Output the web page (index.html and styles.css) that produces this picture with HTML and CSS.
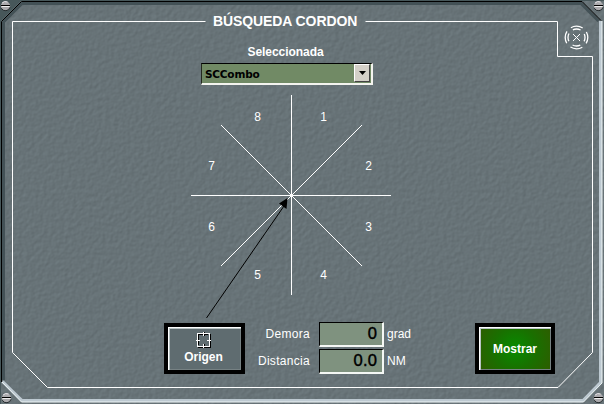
FILE: index.html
```html
<!DOCTYPE html>
<html lang="es">
<head>
<meta charset="utf-8">
<title>Búsqueda Cordon</title>
<link rel="stylesheet" href="styles.css">
</head>
<body>
<main class="panel">
  <svg class="frame" width="604" height="404" viewBox="0 0 604 404" aria-hidden="true">
    <defs>
      <filter id="stone" x="0" y="0" width="100%" height="100%" color-interpolation-filters="sRGB">
        <feTurbulence type="fractalNoise" baseFrequency="0.24" numOctaves="2" seed="7" stitchTiles="stitch"/>
        <feDiffuseLighting surfaceScale="0.17" diffuseConstant="1.25" lighting-color="#758287">
          <feDistantLight azimuth="225" elevation="45"/>
        </feDiffuseLighting>
      </filter>
      <g id="screw">
        <circle r="4.7" fill="#aaa9ac"/>
        <path d="M-4.2 2.2A4.7 4.7 0 0 0 4.5 1.3" fill="none" stroke="#262c2f" stroke-width="1"/>
        <path d="M-3.4 -3A4.7 4.7 0 0 1 2 -4" fill="none" stroke="#e8e6ea"/>
        <path d="M-4.5 -.5H4.5" stroke="#000"/>
        <path d="M-4 .5H4" stroke="#eee"/>
      </g>
    </defs>
    <rect width="604" height="404" fill="#66747a"/>
    <rect width="604" height="404" filter="url(#stone)"/>
    <path d="M0 0H604V1H21L1 21V404H0Z" fill="#47575a"/>
    <path d="M3.5 380V22L22 3.5H581L598.5 21" fill="none" stroke="#435156" stroke-width="3"/>
    <path d="M1.5 382V21.5L21.5 1.5H582L601 20.5" fill="none" stroke="#000"/>
    <path d="M600.5 21V382.500L583 400.500H22L2.500 381.500" fill="none" stroke="#bdc9d1" stroke-width="3"/>
    <path d="M602 21V383L583.500 402H21.500L2 382" fill="none" stroke="#edf4f5"/>
    <path d="M205.500 21.500H12.500V352.500L47.500 387.500H558L592.500 352.500V56.500H557.500V21.500H365.500" fill="none" stroke="#fff"/>
    <use href="#screw" x="5.500" y="6"/>
    <use href="#screw" x="598.500" y="6"/>
    <use href="#screw" x="6.500" y="398"/>
    <use href="#screw" x="598.500" y="398"/>
    <g transform="translate(576.500 37.500)" fill="none" stroke="#fff" stroke-width="1.3">
      <path d="M-3.500 -3.500L3.500 3.500M3.500 -3.500L-3.500 3.500" stroke-width="1"/>
      <circle r="11.300" stroke-dasharray="12.400 5.350" stroke-dashoffset="6.200"/>
      <circle r="8.500" stroke-dasharray="8 5.352" stroke-dashoffset="4"/>
    </g>
  </svg>

  <h1 class="title">BÚSQUEDA CORDON</h1>

  <section class="selector">
    <div class="selector-label">Seleccionada</div>
    <div class="combo">
      <span class="combo-value">SCCombo</span>
      <span class="combo-arrow"><svg width="7" height="4" viewBox="0 0 7 4"><path d="M0 0H7L3.500 4Z"/></svg></span>
    </div>
  </section>

  <svg class="rose" width="202" height="232" viewBox="190 90 202 232">
    <g stroke="#fff" fill="none">
      <path d="M291.500 95V295M191 195.500H391"/>
      <path d="M221 125L362 266M362 125L221 266" shape-rendering="crispEdges"/>
    </g>
    <path d="M206.500 318L284 206" stroke="#000"/>
    <path d="M287.500 198L279 203.500L286.500 209Z"/>
    <g class="rose-labels">
      <text x="257.500" y="121">8</text>
      <text x="323.500" y="121">1</text>
      <text x="368.500" y="170">2</text>
      <text x="368.500" y="231">3</text>
      <text x="323.500" y="279">4</text>
      <text x="257.500" y="279">5</text>
      <text x="211.500" y="231">6</text>
      <text x="211.500" y="170">7</text>
    </g>
  </svg>

  <section class="controls">
    <button class="btn btn-origin" type="button">
      <svg width="15" height="16" viewBox="0 0 15 16" fill="none" shape-rendering="crispEdges">
        <path d="M2 15.500H14.500V2M2.500 13V2.500H12M8.500 0V4M8.500 12V16" stroke="#000"/>
        <path d="M6 1.500H1.500V6M9 1.500H13.500V6M1.500 10V14.500H6M13.500 10V14.500H9M7.500 0V4M7.500 12V16M0 8.500H4M11 8.500H15" stroke="#fff"/>
        <path d="M1.500 6V10M13.500 6V10M6 1.500H9M6 14.500H9" stroke="#fff"/>
      </svg>
      <span>Origen</span>
    </button>
    <div class="fields">
      <span class="name">Demora</span><output class="value">0</output><span class="unit">grad</span>
      <span class="name">Distancia</span><output class="value">0.0</output><span class="unit">NM</span>
    </div>
    <button class="btn btn-show" type="button"><span>Mostrar</span></button>
  </section>
</main>
</body>
</html>
```

FILE: styles.css
```css
* {
  box-sizing: border-box;
}

body {
  margin: 0;
  overflow: hidden;
  font-family: "Liberation Sans", Arial, sans-serif;
  font-size: 12px;
  color: #fff;
}

.panel {
  position: relative;
  isolation: isolate;
  display: flex;
  flex-direction: column;
  width: 604px;
  height: 404px;
  padding-top: 13px;
}

.frame {
  position: absolute;
  inset: 0;
  z-index: -1;
}

.title {
  width: 148px;
  margin: 0 0 0 213px;
  font-size: 14px;
  line-height: 16px;
  white-space: nowrap;
  letter-spacing: -0.1px;
}

.selector {
  width: 173px;
  margin: 15px 0 0 200px;
}

.selector-label {
  height: 19px;
  padding-right: 2px;
  line-height: 16px;
  font-size: 12px;
  font-weight: bold;
  letter-spacing: -0.05px;
  text-align: center;
}

.combo {
  display: flex;
  height: 22px;
  margin-left: 1px;
  background: #718a65;
  border: 1px solid #24291f;
  border-top-color: #000;
  border-right: 2px solid #f4f4ef;
  border-bottom: 2px solid #f4f4ef;
}

.combo-value {
  flex: 1;
  padding-left: 3px;
  font-family: "DejaVu Sans", Verdana, sans-serif;
  font-size: 10.500px;
  font-weight: bold;
  line-height: 20px;
  letter-spacing: -0.2px;
  color: #000;
}

.combo-arrow {
  display: grid;
  place-items: center;
  width: 16px;
  margin: 0 1px 1px 0;
  background: #d4d0c8;
  border: 1px solid #fff;
  border-right-color: #444;
  border-bottom-color: #444;
}

.rose {
  display: block;
  flex: none;
  margin: 5px 0 0 190px;
}

.rose-labels {
  fill: #fff;
  font-size: 12px;
  text-anchor: middle;
}

.controls {
  display: flex;
  align-items: flex-start;
  width: 391px;
  margin: 0 0 0 164px;
  padding-top: 1px;
}

.btn {
  display: flex;
  flex-direction: column;
  align-items: center;
  justify-content: center;
  gap: 2px;
  width: 81px;
  height: 51px;
  padding: 0;
  border: 4px solid #000;
  background: #5f6c70;
  box-shadow: inset 1px 1px 0 #fff, inset 2px 2px 0 #b8c3c4, inset -1px -1px 0 #768183;
  color: #fff;
  font: bold 12px/14px "Liberation Sans", Arial, sans-serif;
}

.btn-origin {
  padding: 0 2px 1px 0;
}

.btn-show {
  width: 80px;
  margin-left: auto;
  background: radial-gradient(circle, #078c00 0%, #197000 50%, #2f5c00 100%);
}

.fields {
  display: grid;
  grid-template-columns: 65px 65px 30px;
  grid-auto-rows: 25px;
  row-gap: 2px;
  column-gap: 9px;
  margin: -1px 0 0 0;
  line-height: 25px;
}

.name {
  text-align: right;
  letter-spacing: 0.3px;
}

.value {
  padding-right: 5px;
  background: #7f927f;
  border: 1px solid #000;
  border-right: 2px solid #f5f8f5;
  border-bottom: 2px solid #f5f8f5;
  color: #000;
  font-family: "DejaVu Sans", Verdana, sans-serif;
  font-size: 16px;
  line-height: 22px;
  letter-spacing: -0.5px;
  text-align: right;
  -webkit-text-stroke: 0.3px #000;
}

.unit {
  margin-left: -6px;
}
```
